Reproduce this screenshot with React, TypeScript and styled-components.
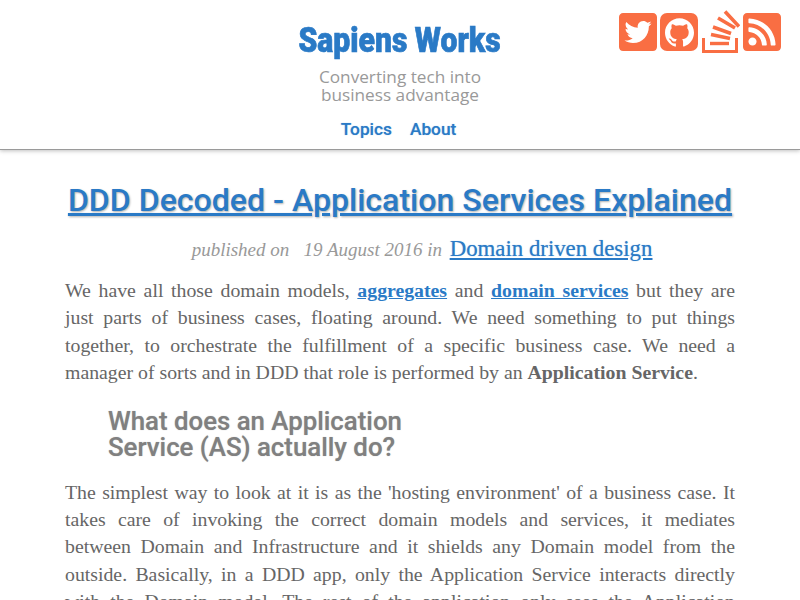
import styled, { createGlobalStyle } from 'styled-components';
import { FaTwitterSquare, FaRssSquare } from 'react-icons/fa';
import { SiGithub } from 'react-icons/si';

const GlobalStyle = createGlobalStyle`
  html, body {
    margin: 0;
    padding: 0;
    background: #fff;
    overflow: hidden;
    height: 600px;
  }
`;

const Header = styled.header`
  position: relative;
  height: 150px;
  box-sizing: border-box;
  padding-top: 21px;
  display: flex;
  flex-direction: column;
  align-items: center;
  border-bottom: 1px solid #9a9a9a;
  box-shadow: 0 1px 4px rgba(0, 0, 0, 0.25);
`;

const SiteTitle = styled.div`
  font-family: 'Roboto', sans-serif;
  font-weight: 900;
  font-size: 35px;
  line-height: 40px;
  color: #2a7ac6;
  -webkit-text-stroke: 0.7px #2a7ac6;
  transform: scaleX(0.86);
  white-space: nowrap;
`;

const Tagline = styled.div`
  margin-top: 7px;
  width: 200px;
  font-family: 'Open Sans', sans-serif;
  font-size: 17.2px;
  line-height: 18px;
  color: #999;
  text-align: center;
`;

const Nav = styled.nav`
  margin-top: 14px;
  padding-right: 3px;
  display: flex;
  gap: 18px;
`;

const NavLink = styled.a`
  font-family: 'Roboto', sans-serif;
  font-weight: 500;
  font-size: 17.3px;
  line-height: 22px;
  color: #2a7ac6;
  text-shadow: 0 0 1px rgba(42, 122, 198, 0.5);
`;

const Social = styled.div`
  position: absolute;
  top: 10px;
  right: 19px;
  display: flex;
  align-items: center;
  gap: 3.5px;
  color: #f96e43;
`;

const SquareIcon = styled.span`
  display: flex;
  width: 38px;
  height: 44px;
`;

const GithubBox = styled.span`
  display: flex;
  align-items: center;
  justify-content: center;
  width: 38px;
  height: 38px;
  border-radius: 7px;
  background: #f96e43;
  color: #fff;
`;

const Article = styled.main`
  padding: 0 65px;
`;

const Title = styled.h1`
  margin: 30px -20px 0;
  font-family: 'Roboto', sans-serif;
  font-weight: 500;
  font-size: 32.1px;
  line-height: 40px;
  text-align: center;
  color: #2a7ac6;
  text-decoration: underline;
  text-shadow: 1px 1px 2px rgba(0, 0, 0, 0.3);
`;

const Meta = styled.div`
  margin-top: 15px;
  padding-left: 44px;
  text-align: center;
  font-family: 'Liberation Serif', serif;
  font-style: italic;
  font-size: 19px;
  line-height: 28px;
  color: #999;
`;

const Category = styled.a`
  margin-left: 3px;
  font-family: 'Liberation Serif', serif;
  font-style: normal;
  font-size: 22.8px;
  color: #2a7ac6;
  text-decoration: underline;
  text-shadow: 0 0 1px rgba(42, 122, 198, 0.6);
`;

const Paragraph = styled.p`
  margin: 13px 0 0;
  font-family: 'Liberation Serif', serif;
  font-size: 19.8px;
  line-height: 27.4px;
  color: #666;
`;

const Line = styled.span<{ $last?: boolean }>`
  display: block;
  white-space: nowrap;
  text-align: ${({ $last }) => ($last ? 'left' : 'justify')};
  text-align-last: ${({ $last }) => ($last ? 'left' : 'justify')};
`;

const InlineLink = styled.a`
  font-weight: bold;
  color: #2a7ac6;
  text-decoration: underline;
`;

const SectionTitle = styled.h2`
  margin: 21px 0 19px 43px;
  width: 320px;
  font-family: 'Roboto', sans-serif;
  font-weight: 500;
  font-size: 25.8px;
  line-height: 26px;
  color: #808080;
  text-shadow: 0 0 1px rgba(128, 128, 128, 0.6);
`;

function StackOverflowMark() {
  return (
    <svg width="38" height="44" viewBox="0 0 38 44" fill="none" stroke="currentColor">
      <path d="M1.5 28V41.5H34.5V28" strokeWidth="3" />
      <path d="M8 33.5H27" strokeWidth="3.4" />
      <path d="M9 24.5L28 28.5M11 17L29 23.5M16 8L33 18M23 1.5L37 16.5" strokeWidth="3.6" />
    </svg>
  );
}

export default function App() {
  return (
    <>
      <GlobalStyle />
      <Header>
        <SiteTitle>Sapiens Works</SiteTitle>
        <Tagline>Converting tech into business advantage</Tagline>
        <Nav>
          <NavLink>Topics</NavLink>
          <NavLink>About</NavLink>
        </Nav>
        <Social>
          <SquareIcon>
            <FaTwitterSquare size="100%" />
          </SquareIcon>
          <GithubBox>
            <SiGithub size={29} />
          </GithubBox>
          <StackOverflowMark />
          <SquareIcon>
            <FaRssSquare size="100%" />
          </SquareIcon>
        </Social>
      </Header>
      <Article>
        <Title>DDD Decoded - Application Services Explained</Title>
        <Meta>
          published on &nbsp; 19 August 2016 in <Category>Domain driven design</Category>
        </Meta>
        <Paragraph>
          <Line>
            We have all those domain models, <InlineLink>aggregates</InlineLink> and{' '}
            <InlineLink>domain services</InlineLink> but they are
          </Line>
          <Line>just parts of business cases, floating around. We need something to put things</Line>
          <Line>together, to orchestrate the fulfillment of a specific business case. We need a</Line>
          <Line $last>
            manager of sorts and in DDD that role is performed by an <b>Application Service</b>.
          </Line>
        </Paragraph>
        <SectionTitle>What does an Application Service (AS) actually do?</SectionTitle>
        <Paragraph>
          <Line>The simplest way to look at it is as the 'hosting environment' of a business case. It</Line>
          <Line>takes care of invoking the correct domain models and services, it mediates</Line>
          <Line>between Domain and Infrastructure and it shields any Domain model from the</Line>
          <Line>outside. Basically, in a DDD app, only the Application Service interacts directly</Line>
          <Line>with the Domain model. The rest of the application only sees the Application</Line>
        </Paragraph>
      </Article>
    </>
  );
}
